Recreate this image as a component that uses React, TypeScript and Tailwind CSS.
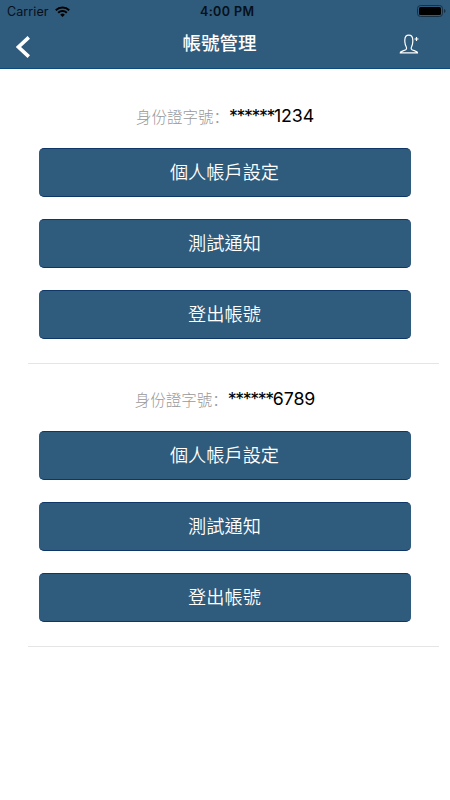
import React from 'react';

interface Account {
  id: string;
  mask: string;
  tail: string;
}

const accounts: Account[] = [
  { id: 'a', mask: '******', tail: '1234' },
  { id: 'b', mask: '******', tail: '6789' },
];

const actions = ['個人帳戶設定', '測試通知', '登出帳號'];

const StatusBar: React.FC = () => (
  <div className="relative flex h-[23px] items-center justify-between pl-[7px] pr-1 text-[12.5px] text-[#06101a]">
    <div className="flex items-center gap-[6px] pt-px">
      <span className="tracking-[0.1px]">Carrier</span>
      <svg className="mb-[2px] h-[11px] w-[15px]" viewBox="0 0 15 11" fill="none" stroke="#000" strokeWidth="2">
        <path d="M0.8 4.2a9.6 9.6 0 0 1 13.4 0" />
        <path d="M3.2 6.8a6.2 6.2 0 0 1 8.6 0" />
        <path d="M7.5 11 5.2 8.7a3.3 3.3 0 0 1 4.6 0Z" fill="#000" stroke="none" />
      </svg>
    </div>
    <span className="absolute left-[200px] top-[3px] font-semibold tracking-[0.4px]">4:00 PM</span>
    <svg className="mb-[2px] h-3 w-[29px]" viewBox="0 0 29 12">
      <rect x="0.5" y="0.5" width="25" height="11" rx="3" fill="none" stroke="#183044" />
      <rect x="2" y="2" width="22" height="8" rx="1.5" fill="#000" />
      <path d="M27 4v4q1.5-.6 1.5-2T27 4Z" fill="#183044" />
    </svg>
  </div>
);

const NavBar: React.FC = () => (
  <div className="grid h-[45px] grid-cols-[60px_1fr_71px] items-center">
    <button className="pl-4 pt-[2px]" aria-label="返回">
      <svg className="h-[22px] w-[14px]" viewBox="0 0 14 22" fill="none" stroke="#fff" strokeWidth="3.6">
        <path d="M12.800 1.400 2.500 11l10.300 9.600" />
      </svg>
    </button>
    <h1 className="pb-[4px] text-center text-[18.500px] font-medium text-white">帳號管理</h1>
    <button aria-label="新增帳號" className="pb-[3px] pl-[20px]">
      <svg className="h-5 w-[20px]" viewBox="0 0 20 20" fill="none" stroke="#fff" strokeWidth="1.2">
        <path d="M1.300 18.900h17.200c0-2.200-5.800-2.200-6.300-4.100-.3-1.500.8-2.600 1.200-4.300.3-1.300.5-2.700.4-4.500-.1-3-1.600-4.900-4-4.900S5.900 3 5.800 6c-.1 1.800.1 3.200.5 4.500.5 1.700 1.500 2.800 1.200 4.300-.5 1.900-6.200 1.900-6.200 4.100Z" />
        <path d="M17.500 3v4M15.500 5h4" />
      </svg>
    </button>
  </div>
);

const AccountSection: React.FC<{ account: Account }> = ({ account }) => (
  <section className="ml-7 mr-[11px] h-[283px] border-b border-[#e5e5e5] pt-[24px]">
    <p className="flex h-[24px] items-center justify-center pr-[17px]">
      <span lang="zh-CN" className="font-['Noto_Sans_CJK_SC',sans-serif] text-[15.500px] font-light text-[#999999]">身份證字號：</span>
      <span className="pb-[2px] text-[17.800px] text-black [font-feature-settings:'calt'_0]">
        <span className="tracking-[-1.400px]">{account.mask}</span>
        <span className="tracking-[-0.100px]">{account.tail}</span>
      </span>
    </p>
    <div className="ml-[11px] mr-[28px] mt-[19px] flex flex-col gap-[22px]">
      {actions.map(label => (
        <button key={label} className="h-[49px] rounded-[5px] border-y border-[#0f3668] bg-[#2f5b7c] pr-px text-[18.200px] font-[350] text-white">
          {label}
        </button>
      ))}
    </div>
  </section>
);

const App: React.FC = () => {
  return (
    <div className="h-[800px] w-[450px] overflow-hidden bg-white font-['Inter','Noto_Sans_CJK_TC',sans-serif]">
      <header className="h-[69px] border-b border-[#0b4a80] bg-[#2f5b7c]">
        <StatusBar />
        <NavBar />
      </header>
      <main className="pt-[12px]">
        {accounts.map(account => (
          <AccountSection key={account.id} account={account} />
        ))}
      </main>
    </div>
  );
};

export default App;
